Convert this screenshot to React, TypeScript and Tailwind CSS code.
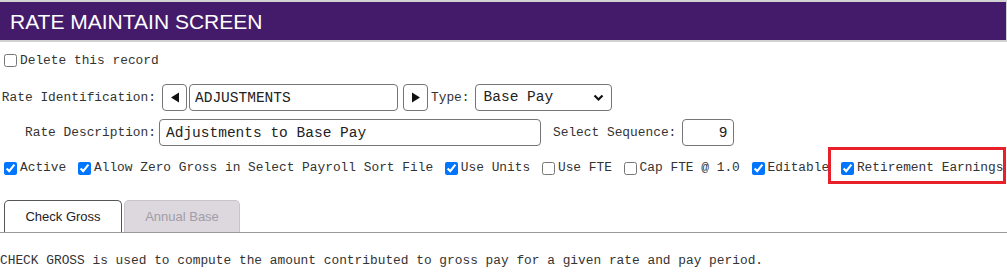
import React from "react";

const mono = "font-['Liberation_Mono','DejaVu_Sans_Mono',monospace]";

function Check({ checked, label }: { checked?: boolean; label: string }) {
  return (
    <label className="inline-flex items-center align-middle">
      <input type="checkbox" defaultChecked={checked} className="ml-[4px] mr-[3px] w-[13px] h-[13px]" />
      <span>{label}</span>
    </label>
  );
}

function Tri({ dir }: { dir: "l" | "r" }) {
  return (
    <svg width="10" height="11" viewBox="0 0 10 11">
      {dir === "l" ? <polygon points="9,0.5 9,10.5 1,5.5" fill="#111" /> : <polygon points="1,0.5 1,10.5 9,5.5" fill="#111" />}
    </svg>
  );
}

export default function App() {
  return (
    <div className={`w-[1007px] h-[280px] bg-white text-[#333] ${mono} text-[12.85px] overflow-hidden`}>
      <div className="h-[42px] bg-[#441b6b] border-t-2 border-b-2 border-r border-[#d2d2d2] flex items-center pl-[10px]">
        <span className="font-['Liberation_Sans',Arial,sans-serif] text-white text-[21px] leading-none">RATE MAINTAIN SCREEN</span>
      </div>

      <div className="h-[38px] flex items-center">
        <Check label="Delete this record" />
      </div>

      <div className="mt-[4px] h-[27px] flex items-center">
        <div className="w-[156px] text-right">Rate Identification:</div>
        <button className="ml-[6px] w-[25px] h-[27px] border border-[#767676] rounded-[4px] bg-white flex items-center justify-center">
          <Tri dir="l" />
        </button>
        <input
          readOnly
          value="ADJUSTMENTS"
          className={`ml-[2px] w-[209px] h-[27px] border border-[#767676] rounded-[4px] px-[5px] text-[14.5px] text-[#222] ${mono}`}
        />
        <button className="ml-[5px] w-[25px] h-[27px] border border-[#767676] rounded-[4px] bg-white flex items-center justify-center">
          <Tri dir="r" />
        </button>
        <span className="ml-[3px]">Type:</span>
        <div className="ml-[5px] w-[137px] h-[27px] border border-[#767676] rounded-[4px] flex items-center justify-between pl-[8px] pr-[7px] text-[14.5px] text-[#222]">
          <span>Base Pay</span>
          <svg width="11" height="8" viewBox="0 0 11 8">
            <polyline points="1.5,1.5 5.5,5.5 9.5,1.5" fill="none" stroke="#111" strokeWidth="2.2" />
          </svg>
        </div>
      </div>

      <div className="mt-[8px] h-[27px] flex items-center">
        <div className="w-[156px] text-right">Rate Description:</div>
        <input
          readOnly
          value="Adjustments to Base Pay"
          className={`ml-[3px] w-[382px] h-[27px] border border-[#767676] rounded-[4px] px-[6px] text-[14.5px] text-[#222] ${mono}`}
        />
        <span className="ml-[12px]">Select Sequence:</span>
        <input
          readOnly
          value="9"
          className={`ml-[6px] w-[52px] h-[27px] border border-[#767676] rounded-[4px] px-[6px] text-right text-[14.5px] text-[#222] ${mono}`}
        />
      </div>

      <div className="mt-[9px] h-[26px] leading-[26px] whitespace-nowrap">
        <Check checked label="Active" /> <Check checked label="Allow Zero Gross in Select Payroll Sort File" />{" "}
        <Check checked label="Use Units" /> <Check label="Use FTE" /> <Check label="Cap FTE @ 1.0" />{" "}
        <Check checked label="Editable" />{" "}
        <span className="relative inline-flex items-center align-middle">
          <Check checked label="Retirement Earnings" />
          <span className="absolute left-[-9px] right-[-3px] top-[-8px] bottom-[-3px] border-[3px] border-[#e8202a]" />
        </span>
      </div>

      <div className="mt-[19px] flex items-end border-b border-[#9a9a9a] pl-[4px] font-['Liberation_Sans',Arial,sans-serif] text-[13px]">
        <div className="w-[118px] h-[32px] bg-white border border-b-0 border-[#555] rounded-t-[5px] flex items-center justify-center text-[#222]">
          Check Gross
        </div>
        <div className="ml-[2px] w-[116px] h-[32px] bg-[#dcd8de] border border-b-0 border-[#c8c4cc] rounded-t-[5px] flex items-center justify-center text-[#a29ca8]">
          Annual Base
        </div>
      </div>

      <div className="mt-[20px] leading-[16px]">
        CHECK GROSS is used to compute the amount contributed to gross pay for a given rate and pay period.
      </div>
    </div>
  );
}
